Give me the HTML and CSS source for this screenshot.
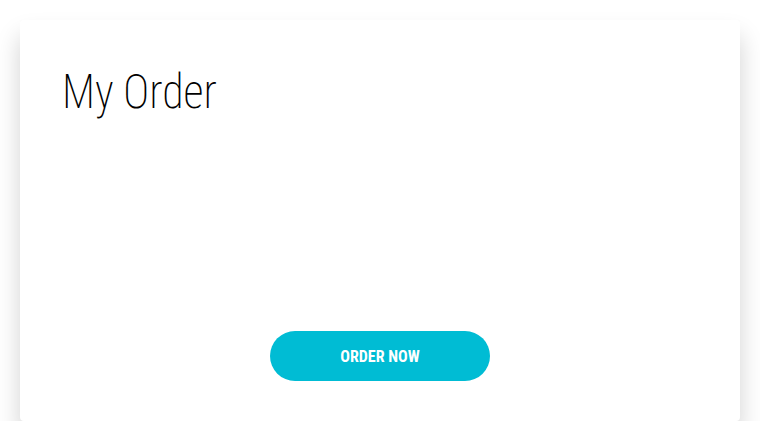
FILE: index.html
```html
<!DOCTYPE html>
<html>
<head>
<meta charset="utf-8">
<link rel="stylesheet" href="styles.css">
</head>
<body>
<div class="card">
  <h1 class="title">My Order</h1>
  <div class="content"></div>
  <div class="actions">
    <button class="order-btn">ORDER NOW</button>
  </div>
</div>
</body>
</html>
```
FILE: styles.css
```css
html, body {
  margin: 0;
  padding: 0;
  background: #ffffff;
}
body {
  padding: 20px 20px 0 20px;
  font-family: "Roboto Condensed", Roboto, sans-serif;
}
.card {
  background: #ffffff;
  border-radius: 4px;
  height: 401px;
  box-sizing: border-box;
  padding: 40px 41px 40px 42px;
  display: flex;
  flex-direction: column;
  box-shadow: 0 16px 24px rgba(0, 0, 0, 0.18);
}
.title {
  margin: 0;
  font-weight: 250;
  font-size: 49px;
  line-height: 64px;
  color: #000;
  transform: scaleX(0.9);
  transform-origin: 0 50%;
}
.content {
  flex: 1;
}
.actions {
  display: flex;
  justify-content: center;
  margin-left: -1px;
}
.order-btn {
  width: 220px;
  height: 50px;
  border: none;
  border-radius: 25px;
  background: #00bcd4;
  color: #fff;
  font-family: "Roboto Condensed", Roboto, sans-serif;
  font-weight: 700;
  font-size: 16px;
  padding: 0;
}
```
